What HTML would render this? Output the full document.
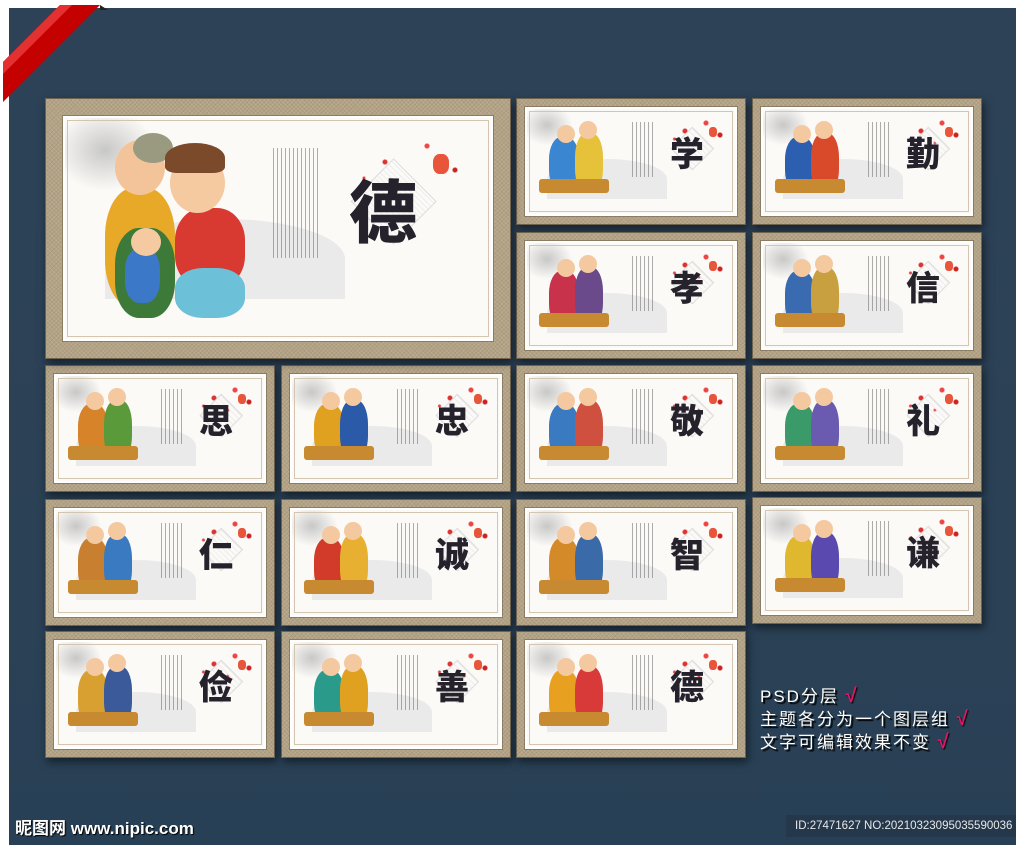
<!DOCTYPE html>
<html><head><meta charset="utf-8">
<style>
*{margin:0;padding:0;box-sizing:border-box}
body{width:1024px;height:845px;background:#fff;position:relative;overflow:hidden;font-family:"Liberation Sans","Noto Sans CJK SC",sans-serif}
#bg{position:absolute;left:9px;top:8px;width:1007px;height:837px;background:linear-gradient(180deg,#2d4257 0%,#2b4156 70%,#284055 100%)}
.p{position:absolute;background:#b3a386;border:1px solid #6f624f;
 background-image:repeating-linear-gradient(45deg,rgba(255,255,255,.1) 0 1px,transparent 1px 3px),repeating-linear-gradient(-45deg,rgba(90,70,40,.12) 0 1px,transparent 1px 3px);
 box-shadow:2px 4px 8px rgba(0,0,0,.5)}
.in{position:absolute;left:8px;top:8px;right:8px;bottom:8px;background:#fbfaf7;border:2px solid #fff;outline:1px solid #8c7c62;overflow:hidden}
.in:after{content:"";position:absolute;left:2px;top:2px;right:2px;bottom:2px;border:1px solid #d2c6b0}
.ch{position:absolute;font-family:"Noto Sans CJK SC","Noto Serif CJK SC",sans-serif;font-weight:900;color:#26222c;line-height:1}
.dia{position:absolute;border:1px solid #ddd;transform:rotate(45deg);background:repeating-linear-gradient(0deg,#eee 0 1px,transparent 1px 4px)}
.tx{position:absolute;background:repeating-linear-gradient(90deg,#777 0 1px,transparent 1px 4px);opacity:.6}
.mt{position:absolute;border-radius:50% 50% 0 0;background:#e6e6e6;opacity:.8}
.bl{position:absolute;border-radius:40%}
.plum{position:absolute;background:radial-gradient(circle at 30% 40%,#d33 0 2px,transparent 3px),radial-gradient(circle at 60% 20%,#e44 0 2px,transparent 3px),radial-gradient(circle at 80% 50%,#c22 0 2px,transparent 3px),radial-gradient(circle at 50% 70%,#e55 0 1px,transparent 2px),radial-gradient(circle at 15% 60%,#d44 0 1px,transparent 2px);}
.lan{position:absolute;background:#e8553a;border-radius:40%}
.bam{position:absolute;background:radial-gradient(ellipse at 40% 40%,#bbb 0,transparent 60%);opacity:.8}
.w{position:absolute;color:#fff;font-size:17px;letter-spacing:2px;text-shadow:2px 2px 1px #000;white-space:nowrap}
.ck{color:#e0156b;font-size:20px;font-weight:bold;text-shadow:1px 1px 1px #000}
</style></head><body>
<div id="bg"></div>
<svg style="position:absolute;left:0;top:0" width="110" height="115"><path d="M3 62 L60 5 L100 5 L3 102Z" fill="#c40000"/><path d="M3 62 L60 5 L72 5 L3 74Z" fill="#e43030"/><path d="M100 5 L108 10 L100 10Z" fill="#222"/></svg>
<div id="c"></div>
<div class="w" style="left:760px;top:682px">PSD分层 <span class="ck">√</span></div>
<div class="w" style="left:760px;top:705px">主题各分为一个图层组 <span class="ck">√</span></div>
<div class="w" style="left:760px;top:728px">文字可编辑效果不变 <span class="ck">√</span></div>
<div style="position:absolute;left:786px;top:815px;width:230px;height:22px;background:#25384b;color:#e8e8e8;font-size:11.5px;line-height:22px;padding-left:9px;white-space:nowrap;overflow:hidden">ID:27471627 NO:20210323095035590036</div>
<div style="position:absolute;left:15px;top:814px;color:#fff;font-size:17px;font-weight:bold;text-shadow:1px 1px 1px #000">昵图网 www.nipic.com</div>
<script>
var P=[
[516,98,'学',['#3a86d0','#e6c23a']],[752,98,'勤',['#2d5fb0','#d84a2a']],
[516,232,'孝',['#c8324a','#6a4a8a']],[752,232,'信',['#3a6ab0','#c8a040']],
[45,365,'思',['#d7832a','#5a9a3a']],[281,365,'忠',['#e0a020','#2a5aa8']],[516,365,'敬',['#3a7ac0','#d05040']],[752,365,'礼',['#3a9a6a','#6a5ab0']],
[45,499,'仁',['#c88030','#3a7ac0']],[281,499,'诚',['#d23a2a','#e8b030']],[516,499,'智',['#d58a2a','#3a6aa8']],[752,497,'谦',['#e0b830','#5a4ab0']],
[45,631,'俭',['#d8a030','#3a5a9a']],[281,631,'善',['#2a9a8a','#e0a020']],[516,631,'德',['#e8a020','#d83a3a']]];
var h='';
function deco(w,hh,cx,cy,fs,s){
 var r='';
 r+='<div class="mt" style="left:'+(20*s)+'px;top:'+(hh*0.45)+'px;width:'+(120*s)+'px;height:'+(40*s)+'px"></div>';
 r+='<div class="bam" style="left:0;top:0;width:'+(50*s)+'px;height:'+(40*s)+'px"></div>';
 r+='<div class="plum" style="left:'+(w-75*s)+'px;top:'+(6*s)+'px;width:'+(70*s)+'px;height:'+(40*s)+'px"></div>';
 r+='<div class="lan" style="left:'+(w-30*s)+'px;top:'+(18*s)+'px;width:'+(8*s)+'px;height:'+(10*s)+'px"></div>';
 r+='<div class="tx" style="left:'+(cx-55*s)+'px;top:'+(cy-30*s)+'px;width:'+(24*s)+'px;height:'+(55*s)+'px"></div>';
 r+='<div class="dia" style="left:'+(cx-fs*0.3)+'px;top:'+(cy-fs*0.55)+'px;width:'+(fs*0.9)+'px;height:'+(fs*0.9)+'px"></div>';
 r+='<div class="ch" style="left:'+(cx-fs/2)+'px;top:'+(cy-fs/2)+'px;font-size:'+fs+'px">';
 return r;
}
P.forEach(function(p){
 var x=p[0],y=p[1],c=p[2],k=p[3],ww=212,hh=110;
 h+='<div class="p" style="left:'+x+'px;top:'+y+'px;width:230px;height:127px"><div class="in">';
 h+=deco(ww,hh,160,43,34,1)+c+'</div>';
 h+='<div class="bl" style="left:22px;top:28px;width:30px;height:55px;background:'+k[0]+'"></div>';
 h+='<div class="bl" style="left:48px;top:24px;width:28px;height:60px;background:'+k[1]+'"></div>';
 h+='<div class="bl" style="left:30px;top:16px;width:18px;height:18px;background:#f5c9a0;border-radius:50%"></div>';
 h+='<div class="bl" style="left:52px;top:12px;width:18px;height:18px;background:#f5c9a0;border-radius:50%"></div>';
 h+='<div class="bl" style="left:12px;top:70px;width:70px;height:14px;background:#c88a30;border-radius:3px"></div>';
 h+='</div></div>';
});
h+='<div class="p" style="left:45px;top:98px;width:466px;height:261px;border-width:1px"><div class="in" style="left:17px;top:17px;right:17px;bottom:17px">';
h+=deco(428,225,318,90,68,2)+'德</div>';
h+='<div class="bl" style="left:40px;top:70px;width:70px;height:120px;background:#e8a828"></div>';
h+='<div class="bl" style="left:50px;top:22px;width:50px;height:55px;background:#f3c49a;border-radius:50%"></div>';
h+='<div class="bl" style="left:68px;top:15px;width:40px;height:30px;background:#9a9a80;border-radius:50%"></div>';
h+='<div class="bl" style="left:50px;top:110px;width:60px;height:90px;background:#3d7a3a"></div>';
h+='<div class="bl" style="left:60px;top:130px;width:35px;height:55px;background:#3c78c8"></div>';
h+='<div class="bl" style="left:66px;top:110px;width:30px;height:28px;background:#f5caa0;border-radius:50%"></div>';
h+='<div class="bl" style="left:110px;top:90px;width:70px;height:80px;background:#d83a32"></div>';
h+='<div class="bl" style="left:110px;top:150px;width:70px;height:50px;background:#6cc0d8"></div>';
h+='<div class="bl" style="left:105px;top:35px;width:55px;height:60px;background:#f5caa0;border-radius:50%"></div>';
h+='<div class="bl" style="left:100px;top:25px;width:60px;height:30px;background:#7a4a2a;border-radius:50% 50% 20% 20%"></div>';
h+='</div></div>';
document.getElementById('c').innerHTML=h;
</script>
</body></html>
